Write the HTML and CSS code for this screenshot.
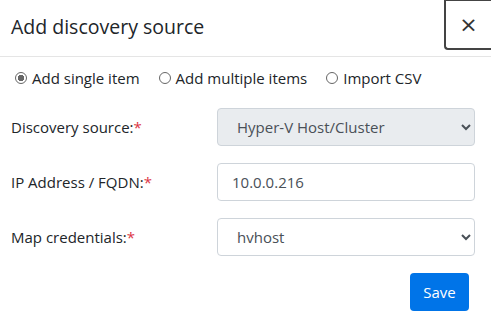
FILE: index.html
```html
<!DOCTYPE html>
<html lang="en">
<head>
  <meta charset="UTF-8">
  <title>Add discovery source</title>
  <link rel="stylesheet" href="styles.css">
</head>
<body>
  <div class="modal">
    <div class="modal-header">
      <h5 class="modal-title">Add discovery source</h5>
      <button class="close" type="button">&times;</button>
    </div>

    <div class="modal-body">
      <div class="mode-row">
        <label class="radio"><input type="radio" name="mode" checked> Add single item</label>
        <label class="radio"><input type="radio" name="mode"> Add multiple items</label>
        <label class="radio"><input type="radio" name="mode"> Import CSV</label>
      </div>

      <div class="form-row">
        <label class="form-label">Discovery source:<span class="req">*</span></label>
        <select class="form-control" disabled>
          <option>Hyper-V Host/Cluster</option>
        </select>
      </div>

      <div class="form-row">
        <label class="form-label">IP Address / FQDN:<span class="req">*</span></label>
        <input class="form-control" type="text" value="10.0.0.216">
      </div>

      <div class="form-row">
        <label class="form-label">Map credentials:<span class="req">*</span></label>
        <select class="form-control">
          <option>hvhost</option>
        </select>
      </div>

      <div class="actions">
        <button class="btn-save" type="button">Save</button>
      </div>
    </div>
  </div>
</body>
</html>
```

FILE: styles.css
```css
body {
  margin: 0;
  background-color: #fff;
  color: #212529;
  font-family: 'Open Sans', 'Noto Sans', sans-serif;
}

.modal {
  width: 491px;
}

.modal-header {
  display: flex;
  justify-content: space-between;
  align-items: flex-start;
  height: 56px;
  border-bottom: 1px solid #e5e5e5;
}

.modal-title {
  margin: 0;
  padding: 13px 0 0 11px;
  font-size: 19.5px;
  font-weight: 500;
  line-height: 28px;
}

.close {
  width: 47px;
  height: 51px;
  margin-top: -1px;
  padding: 0;
  background: #fff;
  border: 2px solid #444;
  border-right: none;
  border-radius: 0 0 0 4px;
  color: #333;
  font-family: 'DejaVu Sans', sans-serif;
  font-size: 22px;
  line-height: 1;
}

.modal-body {
  padding: 8px 16px 0 11px;
}

.mode-row {
  display: flex;
  gap: 19px;
  margin-left: 4px;
  height: 26px;
  align-items: center;
  font-size: 15px;
}

.radio {
  display: flex;
  align-items: center;
  gap: 5px;
}

.radio input {
  appearance: none;
  width: 12px;
  height: 12px;
  margin: 0;
  border: 1px solid #666;
  border-radius: 50%;
  background: #fff;
}

.radio input:checked {
  background: radial-gradient(circle, #666 0 3px, #fff 3.5px);
}

.form-row {
  display: flex;
  align-items: center;
  margin-top: 17px;
}

.form-row:first-of-type {
  margin-top: 18px;
}

.form-label {
  width: 206px;
  font-size: 15px;
}

.req {
  color: #dc3545;
}

.form-control {
  box-sizing: border-box;
  width: 258px;
  height: 38px;
  padding: 0 12px 0 15px;
  background-color: #fff;
  border: 1px solid #ced4da;
  border-radius: 4px;
  color: #495057;
  font-family: inherit;
  font-size: 15px;
}

input.form-control {
  padding-left: 14px;
}

select.form-control:disabled {
  background-color: #e9ecef;
  opacity: 1;
  color: #495057;
}

.actions {
  display: flex;
  justify-content: flex-end;
  margin-top: 17px;
  padding-right: 6px;
}

.btn-save {
  width: 59px;
  height: 38px;
  background-color: #0074e8;
  border: none;
  border-radius: 4px;
  color: #fff;
  font-family: inherit;
  font-size: 15px;
}
```
